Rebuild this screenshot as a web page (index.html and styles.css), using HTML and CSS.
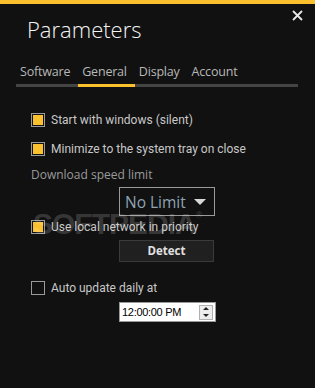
FILE: index.html
```html
<!DOCTYPE html>
<html lang="en">
<head>
    <meta charset="UTF-8">
    <title>Parameters</title>
    <link rel="stylesheet" href="styles.css">
</head>
<body>
    <div class="window">
        <div class="topbar"></div>
        <svg class="close" width="11" height="11" viewBox="0 0 11 11">
            <path d="M1 1 L10 10 M10 1 L1 10" stroke="#e8e8e8" stroke-width="1.8" fill="none"/>
        </svg>
        <h1>Parameters</h1>

        <div class="tabs">
            <span class="tab">Software</span>
            <span class="tab active">General</span>
            <span class="tab">Display</span>
            <span class="tab">Account</span>
        </div>

        <div class="panel">
            <label class="check"><span class="box on"></span>Start with windows (silent)</label>
            <label class="check"><span class="box on"></span>Minimize to the system tray on close</label>
            <div class="caption">Download speed limit</div>
            <div class="select">No Limit <span class="arrow"></span></div>
            <label class="check tight"><span class="box on"></span>Use local network in priority</label>
            <div class="button">Detect</div>
            <label class="check gap"><span class="box"></span>Auto update daily at</label>
            <div class="time">
                <span>12:00:00 PM</span>
                <span class="spin"><i class="up"></i><i class="down"></i></span>
            </div>
        </div>

        <div class="watermark">SOFTPEDIA<sup>&reg;</sup></div>
    </div>
</body>
</html>
```

FILE: styles.css
```css
body {
    margin: 0;
    background-color: #111111;
    font-family: 'Open Sans', 'Noto Sans', sans-serif;
    color: #d8d8d8;
}

.window {
    position: relative;
    width: 315px;
    height: 388px;
    overflow: hidden;
}

.topbar {
    height: 4px;
    background-color: #fbc02d;
}

.close {
    position: absolute;
    top: 10px;
    left: 292px;
}

h1 {
    margin: 9px 0 0 27px;
    font-size: 22px;
    font-weight: 300;
    color: #f4f4f4;
    line-height: 32px;
}

.tabs {
    display: flex;
    margin: 18px 17px 0 16px;
    border-bottom: 3px solid #444444;
}

.tab {
    padding: 0 8px 4px 4px;
    font-size: 12.5px;
    letter-spacing: -0.2px;
    color: #b8b8b8;
    margin-bottom: -3px;
    border-bottom: 3px solid transparent;
}

.tab.active {
    border-bottom-color: #fbc02d;
}

.panel {
    display: flex;
    flex-direction: column;
    padding: 26px 0 0 31px;
}

.check {
    display: flex;
    align-items: center;
    gap: 6px;
    height: 14px;
    margin-bottom: 15px;
    font-family: Roboto, 'Open Sans', sans-serif;
    font-size: 12px;
    color: #c8c8c8;
}

.check.tight {
    margin-top: 4px;
    margin-bottom: 6px;
}

.check.gap {
    margin-top: 19px;
    margin-bottom: 7px;
}

.box {
    width: 10px;
    height: 10px;
    border: 1px solid #9a9a9a;
    padding: 1px;
    background-clip: content-box;
    flex-shrink: 0;
}

.box.on {
    background-color: #fbc02d;
}

.caption {
    font-size: 12px;
    color: #9a9a9a;
    margin-top: -5px;
    margin-bottom: 4px;
}

.select {
    display: flex;
    align-items: center;
    justify-content: space-between;
    width: 81px;
    height: 27px;
    margin-left: 88px;
    padding: 0 8px 0 5px;
    border: 1px solid #9a9a9a;
    font-size: 15.5px;
    color: #8fa4b4;
}

.arrow {
    width: 0;
    height: 0;
    border-left: 6px solid transparent;
    border-right: 6px solid transparent;
    border-top: 6px solid #d8d8d8;
}

.button {
    width: 93px;
    height: 20px;
    margin-left: 88px;
    border: 1px solid #3a3a3a;
    background-color: #202020;
    text-align: center;
    line-height: 20px;
    font-size: 11.5px;
    font-weight: 700;
    color: #e0e0e0;
}

.time {
    display: flex;
    align-items: center;
    justify-content: space-between;
    width: 91px;
    height: 18px;
    margin-left: 88px;
    padding: 0 2px 0 2px;
    border: 1px solid #9a9a9a;
    background-color: #ffffff;
    font-family: 'Liberation Sans', Arial, sans-serif;
    font-size: 11px;
    letter-spacing: -0.3px;
    color: #000000;
}

.spin {
    display: flex;
    flex-direction: column;
    justify-content: space-around;
    align-items: center;
    width: 12px;
    height: 13px;
    border: 1px solid #b0b0b0;
    background-color: #ececec;
}

.spin i {
    width: 0;
    height: 0;
    border-left: 3px solid transparent;
    border-right: 3px solid transparent;
}

.spin .up {
    border-bottom: 3px solid #222222;
}

.spin .down {
    border-top: 3px solid #222222;
}

.watermark {
    position: absolute;
    top: 207px;
    left: 33px;
    font-family: 'Liberation Sans', Arial, sans-serif;
    font-size: 30px;
    font-weight: 700;
    letter-spacing: -1px;
    color: rgba(255, 255, 255, 0.17);
    pointer-events: none;
}

.watermark sup {
    font-size: 9px;
    vertical-align: 16px;
}
```
